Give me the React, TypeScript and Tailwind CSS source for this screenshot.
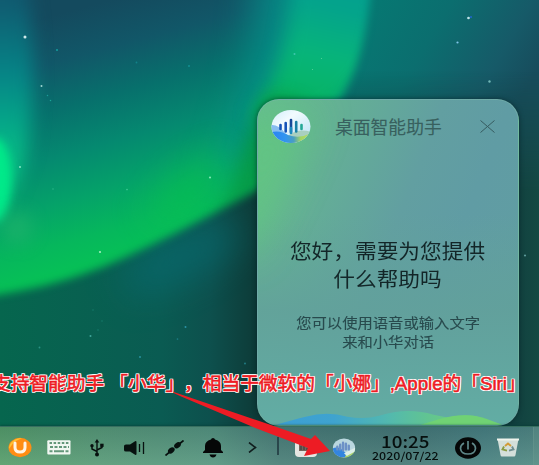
import React from 'react';

const stars: [number, number, number, string][] = [
  [25, 37, 1.8, '#cfe9ea'], [57, 50, 1.2, '#159c9f'], [136.5, 62.5, 1.1, '#118289'], [189, 66, 1.2, '#128f92'],
  [41.5, 86, 1.2, '#9fd6d2'], [47.5, 95.5, 0.9, '#1b9d98'], [50.5, 100.5, 0.9, '#1aa596'], [20, 167, 1.1, '#8df0cf'],
  [210, 177.5, 1.3, '#7de8b4'], [127, 189.5, 1, '#3cc794'], [53, 189, 0.8, '#31b98d'], [100, 252, 1.3, '#a2efbd'],
  [90.5, 336, 1.2, '#3fa59b'], [98, 330, 0.9, '#177f70'], [102, 321, 0.8, '#177f70'], [93, 310, 0.8, '#177f70'],
  [39.5, 347.5, 1.1, '#2a9183'], [185.5, 327, 1.2, '#2b93a5'], [177.5, 339, 1, '#1f7f86'], [140, 357, 1.1, '#2c95a3'],
  [245, 363.5, 1.2, '#207880'], [294.5, 54, 1.2, '#3ec7ad'], [321.5, 58.5, 0.7, '#58d39b'], [312.5, 69.5, 0.7, '#58d39b'],
  [468.5, 18, 1.6, '#bfe4e8'], [471, 17, 1.1, '#2166d8'], [457.5, 42.5, 1.3, '#7fc4e8'], [489.5, 81.5, 1.4, '#72b8b8'],
  [525, 255.5, 1.3, '#5d9a9a'],
];

function Wallpaper() {
  return (
    <svg className="absolute inset-0 h-full w-full" viewBox="0 0 539 465">
      <defs>
        <linearGradient id="ground" x1="0" y1="0" x2="1" y2="0">
          <stop offset="0" stopColor="#06664e" />
          <stop offset=".3" stopColor="#0a5b52" />
          <stop offset=".39" stopColor="#0d504d" />
          <stop offset=".475" stopColor="#0d3b38" />
          <stop offset=".95" stopColor="#11403f" />
          <stop offset="1" stopColor="#144943" />
        </linearGradient>
        <linearGradient id="sky" x1="110" y1="0" x2="185" y2="275" gradientUnits="userSpaceOnUse">
          <stop offset="0" stopColor="#144a5e" />
          <stop offset=".16" stopColor="#115768" />
          <stop offset=".32" stopColor="#07706c" />
          <stop offset=".48" stopColor="#058970" />
          <stop offset=".64" stopColor="#05a269" />
          <stop offset=".78" stopColor="#06b75c" />
          <stop offset=".9" stopColor="#06c255" />
        </linearGradient>
        <linearGradient id="east" x1="350" y1="0" x2="520" y2="100" gradientUnits="userSpaceOnUse">
          <stop offset="0" stopColor="#057b73" />
          <stop offset=".45" stopColor="#0b6e6f" />
          <stop offset=".8" stopColor="#165a68" />
          <stop offset="1" stopColor="#174c5c" />
        </linearGradient>
        <linearGradient id="eastMask" x1="0" y1="70" x2="0" y2="190" gradientUnits="userSpaceOnUse">
          <stop offset="0" stopColor="#fff" />
          <stop offset="1" stopColor="#000" />
        </linearGradient>
        <mask id="eastFade" maskUnits="userSpaceOnUse" x="0" y="0" width="539" height="465"><rect width="539" height="465" fill="url(#eastMask)" /></mask>
        <linearGradient id="curtain" x1="0" y1="0" x2="0" y2="240" gradientUnits="userSpaceOnUse">
          <stop offset="0" stopColor="#105a70" />
          <stop offset=".3" stopColor="#068386" />
          <stop offset=".5" stopColor="#05a488" />
          <stop offset=".75" stopColor="#08cd84" />
          <stop offset="1" stopColor="#12b96c" />
        </linearGradient>
        <linearGradient id="column" x1="320" y1="0" x2="295" y2="110" gradientUnits="userSpaceOnUse">
          <stop offset="0" stopColor="#04a28d" />
          <stop offset=".5" stopColor="#07b579" />
          <stop offset="1" stopColor="#06b25d" />
        </linearGradient>
        <filter id="b4" filterUnits="userSpaceOnUse" x="-500" y="-500" width="1600" height="1500" colorInterpolationFilters="sRGB"><feGaussianBlur stdDeviation="4" /></filter>
        <filter id="b9" filterUnits="userSpaceOnUse" x="-500" y="-500" width="1600" height="1500" colorInterpolationFilters="sRGB"><feGaussianBlur stdDeviation="9" /></filter>
        <filter id="b18" filterUnits="userSpaceOnUse" x="-500" y="-500" width="1600" height="1500" colorInterpolationFilters="sRGB"><feGaussianBlur stdDeviation="18" /></filter>
        <mask id="arc" maskUnits="userSpaceOnUse" x="0" y="0" width="539" height="465">
          <path d="M-40 -40H373C369 30 359 70 338 105C315 145 285 173 257 190C215 213 150 248 100 268C60 283 30 291 -40 300Z" fill="#fff" filter="url(#b4)" />
        </mask>
      </defs>
      <rect width="539" height="465" fill="url(#ground)" />
      <ellipse cx="180" cy="258" rx="65" ry="22" fill="#08696e" opacity=".8" filter="url(#b18)" transform="rotate(-27 180 258)" />
      <rect x="300" width="239" height="190" fill="url(#east)" mask="url(#eastFade)" />
      <g mask="url(#arc)">
        <rect width="400" height="320" fill="url(#sky)" />
        <path d="M255 -60H410V60L330 130L200 190C240 130 258 50 255 -60Z" fill="#05918a" opacity=".8" filter="url(#b18)" />
        <path d="M292 -50H420C410 40 360 90 310 125L250 118C278 80 294 30 292 -50Z" fill="url(#column)" filter="url(#b9)" />
        <path d="M266 95L247 135L230 190L215 222L330 150L300 100Z" fill="#069642" opacity=".85" filter="url(#b9)" />
        <ellipse cx="190" cy="190" rx="50" ry="17" fill="#07c151" opacity=".85" filter="url(#b18)" transform="rotate(-38 190 190)" />
        <path d="M-30 -30H25C36 40 35 105 27 150Q17 195 -30 245Z" fill="url(#curtain)" filter="url(#b9)" />
        <ellipse cx="-4" cy="180" rx="15" ry="42" fill="#00e989" filter="url(#b4)" />
        <ellipse cx="17" cy="228" rx="15" ry="16" fill="#20b46c" opacity=".7" filter="url(#b9)" />
      </g>
      {stars.map(([x, y, r, c], i) => <circle key={i} cx={x} cy={y} r={r * 0.85} fill={c} />)}
    </svg>
  );
}

function AssistantLogo() {
  return (
    <svg className="h-[34px] w-[40px]" viewBox="0 0 40 34">
      <defs>
        <linearGradient id="orb" x1="0" y1="0" x2="1" y2="1"><stop offset="0" stopColor="#d0edfa" /><stop offset=".35" stopColor="#f2fbfe" /><stop offset="1" stopColor="#b5dff5" /></linearGradient>
        <linearGradient id="hill" x1="0" x2="1"><stop offset="0" stopColor="#2a83f2" /><stop offset=".38" stopColor="#3295f0" /><stop offset=".6" stopColor="#4a9ec0" /><stop offset=".78" stopColor="#a3d565" /><stop offset="1" stopColor="#b5dc62" /></linearGradient>
        <clipPath id="orbClip"><ellipse cx="20" cy="16.5" rx="19.5" ry="16.5" /></clipPath>
      </defs>
      <g clipPath="url(#orbClip)">
        <rect width="40" height="34" fill="url(#orb)" />
        <path d="M0 15Q7 14 14 23L0 24Z" fill="#86bdf0" />
        <path d="M18 25Q28 18 40 22V34H18Z" fill="#a9cfc0" />
        <path d="M0 22Q10 20 17 25Q28 29 38 24V34H0Z" fill="url(#hill)" />
      </g>
      <g strokeWidth="2.6" strokeLinecap="round">
        <path d="M9.5 15v4M14.7 13v8.500" stroke="#1553b7" />
        <path d="M20 10v12" stroke="#17499a" />
        <path d="M20 18v5" stroke="#1b8bc0" />
        <path d="M25.200 12v9.500" stroke="#187fa5" />
        <path d="M30.500 15v4" stroke="#25a897" />
      </g>
    </svg>
  );
}

function AssistantWindow() {
  return (
    <section className="absolute left-[257px] top-[99px] flex h-[327px] w-[262px] flex-col overflow-hidden rounded-[22px] border border-[#80b9ad]/50 bg-[linear-gradient(112deg,#66bd90_0%,#64b095_22%,#629fa1_48%,#609ca4_65%,#619ea1_100%)] shadow-[0_0_5px_#062024aa]">
      <svg className="absolute inset-0 h-full w-full" viewBox="0 0 262 327">
        <defs>
          <filter id="glow" filterUnits="userSpaceOnUse" x="-200" y="-200" width="600" height="600"><feGaussianBlur stdDeviation="20" /></filter>
          <linearGradient id="wave" x1="20" x2="245" gradientUnits="userSpaceOnUse"><stop offset="0" stopColor="#3c9fd4" /><stop offset=".25" stopColor="#3fa3cf" /><stop offset=".5" stopColor="#53b9ae" /><stop offset=".72" stopColor="#65c78a" /><stop offset="1" stopColor="#70d078" /></linearGradient>
          <linearGradient id="lower" x1="0" y1="0" x2="0" y2="1"><stop offset=".35" stopColor="#62a398" stopOpacity="0" /><stop offset=".65" stopColor="#62a19b" stopOpacity=".85" /><stop offset="1" stopColor="#62ada4" /></linearGradient>
        </defs>
        <rect width="262" height="327" fill="url(#lower)" />
        <path d="M-20 20L60 10L30 80L-5 155H-30Z" fill="#60ca7c" opacity=".7" filter="url(#glow)" />
        <path d="M18 327Q36 322 48 319Q70 313 90 319Q108 322 122 318Q150 309 177 317L192 320Q211 315 224 320L246 327Z" fill="url(#wave)" />
        <path d="M184 321Q210 314 230 321L246 327H164Z" fill="#70d274" />
      </svg>
      <header className="relative flex h-[53px] items-center pl-[13px] pr-[23px]">
        <AssistantLogo />
        <h1 className="-mt-[1px] ml-[24px] flex-1 whitespace-nowrap text-[17.8px] leading-[24px] text-[#38605e] [-webkit-text-stroke:0.1px_#38605e]">桌面智能助手</h1>
        <svg className="h-[13px] w-[15px]" viewBox="0 0 15 13" stroke="#365b60" strokeWidth="1" fill="none"><path d="M.5.500l14 12M14.500.500l-14 12" /></svg>
      </header>
      <div className="relative mt-[84px] flex flex-col items-center whitespace-nowrap">
        <p className="origin-center scale-x-[1.09] text-center text-[19.9px] leading-[27.5px] text-[#132628]">您好，需要为您提供<br />什么帮助吗</p>
        <p className="mt-[21px] origin-center scale-x-[1.08] text-center text-[14.2px] leading-[19px] text-[#284a4d] [-webkit-text-stroke:0.1px_#284a4d]">您可以使用语音或输入文字<br />来和小华对话</p>
      </div>
    </section>
  );
}

function Taskbar() {
  return (
    <footer className="absolute inset-x-0 bottom-0 flex h-[39px] items-center border-t border-[#376f60] bg-[linear-gradient(90deg,#5a9f68_0%,#5c9b77_18%,#5a9581_40%,#4c7b77_52%,#477475_75%,#4b7f82_90%,#548784_100%)] pt-[3px] shadow-[0_-1px_2px_#073c3588]">
      <div className="absolute inset-0 bg-gradient-to-b from-[#174c51]/20 to-[#81bca5]/20" />
      <svg className="relative ml-[8px] h-[22px] w-[24px]" viewBox="0 0 24 22">
        <ellipse cx="12" cy="10.500" rx="11.500" ry="9.700" fill="#ff8d13" />
        <path d="M1 12C1 5 7 1 14 1L6 5Z" fill="#ffc233" />
        <path d="M7 6v4.500q0 4.500 5 4.500t5-4.500V6" fill="none" stroke="#fff3e3" strokeWidth="3" strokeLinecap="round" />
      </svg>
      <svg className="relative ml-[15px] h-[15px] w-[24px]" viewBox="0 0 24 15">
        <rect x=".3" y=".3" width="23.200" height="14.300" rx="1" fill="#f1f7f2" />
        <g stroke="#63977a" strokeWidth="1.900"><path d="M2.500 3h19" strokeDasharray="2.500 1.600" /><path d="M3 7h19" strokeDasharray="3 1.500" /><path d="M2.500 11.200h3M7 11.200h10M18.500 11.200h3" /></g>
      </svg>
      <svg className="relative ml-[19px] h-[18px] w-[14px]" viewBox="0 0 14 18" fill="#07110f" stroke="#07110f">
        <path d="M7 2v13M7 12.500L2 10V7M7 11l5-2.500V6" fill="none" strokeWidth="1.400" />
        <path d="M7 0l2.300 3.500H4.700Z" stroke="none" /><circle cx="7" cy="15.500" r="2" stroke="none" /><circle cx="2" cy="6.800" r="1.700" stroke="none" /><rect x="10.200" y="4.700" width="3.400" height="3.200" stroke="none" />
      </svg>
      <svg className="relative ml-[20px] h-[14px] w-[21px]" viewBox="0 0 21 14">
        <path d="M0 5q0-1.500 2-1.500h4L11.500 0q1 0 1 1v12q0 1-1 1L6 10.500H2Q0 10.500 0 9Z" fill="#07110f" /><path d="M15.500 3v8M19.500 1v12" stroke="#07110f" strokeWidth="1.300" />
      </svg>
      <svg className="relative ml-[20px] h-[16px] w-[19px]" viewBox="0 0 19 16" fill="#07110f">
        <path d="M.5 15.500L6 10.800M13 5L18.500.500" stroke="#07110f" strokeWidth="1.700" />
        <ellipse cx="6.300" cy="10.400" rx="3.700" ry="2.600" transform="rotate(-38 6.300 10.400)" /><ellipse cx="12.500" cy="5.300" rx="3.700" ry="2.600" transform="rotate(-38 12.500 5.300)" />
      </svg>
      <svg className="relative ml-[18px] h-[20px] w-[22px]" viewBox="0 0 22 20" fill="#050707">
        <path d="M1 15v-1l2-2V8q0-5 6-6.500Q9.200 0 11 0t2 1.500Q19 3 19 8v4l2 2v1ZM7.500 16.500h7q-.8 3-3.500 3t-3.500-3Z" />
      </svg>
      <svg className="relative ml-[24px] h-[11px] w-[9px]" viewBox="0 0 9 11" fill="none" stroke="#101e1e" strokeWidth="1.600"><path d="M1 .5L7.500 5.500 1 10.500" /></svg>
      <div className="relative -mt-[3px] ml-[20px] h-[18px] w-[2px] bg-[#29474b]" />
      <div className="relative ml-[16px] flex h-[18px] w-[22px] items-center justify-center rounded-[4px] bg-[#e5e6e1]">
        <svg className="h-[11px] w-[16px]" viewBox="0 0 16 11"><path d="M1 1h5l4 4 5-2v6H1Z" fill="#73655c" /><path d="M3 8V4M6 8V3M9 8V6M12 8V5" stroke="#353539" /></svg>
      </div>
      <svg className="relative ml-[15px] h-[20px] w-[24px]" viewBox="0 0 24 21">
        <defs><clipPath id="tray"><ellipse cx="12" cy="10.500" rx="11.700" ry="10" /></clipPath></defs>
        <g clipPath="url(#tray)"><rect width="24" height="21" fill="#b9d7df" /><path d="M0 11Q7 8 13 15L20 20H0Z" fill="#3385df" /><path d="M13 21Q13 15 24 13V21Z" fill="#a8d265" /><path d="M12 16L24 10v4l-9 5Z" fill="#dceee9" /></g>
        <path d="M5 9v3M8 7v5M11 5v8M14 6v6M17 8v4" stroke="#6c91c6" strokeWidth="2.500" strokeLinecap="round" />
      </svg>
      <div className="relative ml-[15px] flex w-[68px] flex-col items-center whitespace-nowrap text-[#07100f]">
        <span className="scale-x-[1.14] text-[16.500px] font-medium leading-[15px]">10:25</span>
        <span className="scale-x-[1.18] text-[10.600px] font-medium leading-[13px]">2020/07/22</span>
      </div>
      <svg className="relative ml-[16px] h-[22px] w-[26px]" viewBox="0 0 26 22">
        <ellipse cx="13" cy="11" rx="13" ry="10.700" fill="#050707" /><path d="M9 6Q5.500 8 5.500 11.500Q6 17 13 17t7.500-5.500Q20.500 8 17 6M13 4v8.500" fill="none" stroke="#5f8889" strokeWidth="1.700" />
      </svg>
      <svg className="relative ml-[16px] h-[19px] w-[22px]" viewBox="0 0 22 19">
        <path d="M.5 1h21L18.500 17Q18.300 18.500 17 18.500H5Q3.700 18.500 3.500 17Z" fill="#d4dfda" /><path d="M0 .5h22v2H0Z" fill="#eff3ec" />
        <path d="M8 8l3-2.500 3 2.500" fill="none" stroke="#d29b37" strokeWidth="1.900" /><path d="M7 8.500l-1.500 3 4.500 1.200" fill="none" stroke="#899b42" strokeWidth="1.900" /><path d="M15 8.500l1.500 3-4.500 1.200" fill="none" stroke="#718f91" strokeWidth="1.900" />
      </svg>
      <div className="absolute bottom-0 right-0 h-full w-[6px] border-l border-[#69988f]/50 bg-[#6b9b91]/25" />
    </footer>
  );
}

export default function App() {
  return (
    <main className="relative h-[465px] w-[539px] overflow-hidden font-['Noto_Sans_CJK_SC','Noto_Sans',sans-serif]">
      <Wallpaper />
      <AssistantWindow />
      <Taskbar />
      <svg className="absolute inset-0 h-full w-full" viewBox="0 0 539 465"><path d="M165 389L268 424L311 439L315 435L330 451L304 456L308 448L253 427L180 396Z" fill="#ed1c24" /></svg>
      <p className="absolute left-[-8px] top-[370px] whitespace-pre font-['Liberation_Sans','Noto_Sans_CJK_SC',sans-serif] text-[18.700px] leading-[28px] text-[#ed1c24] [-webkit-text-stroke:0.600px_#ed1c24] [text-shadow:1px_0_0_#fff,-1px_0_0_#fff,0_1px_0_#fff,0_-1px_0_#fff,1px_1px_0_#fff,-1px_-1px_0_#fff,1px_-1px_0_#fff,-1px_1px_0_#fff] [text-spacing-trim:space-all]">支持智能助手 「小华」，相当于微软的「小娜」,Apple的「Siri」</p>
    </main>
  );
}
